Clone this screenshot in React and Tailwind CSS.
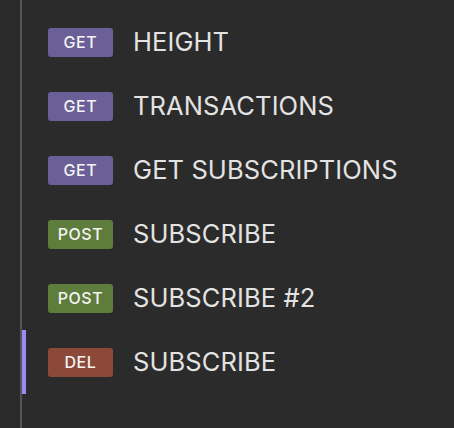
export default function App() {
  const items = [
    { m: "GET", label: "HEIGHT" },
    { m: "GET", label: "TRANSACTIONS" },
    { m: "GET", label: "GET SUBSCRIPTIONS" },
    { m: "POST", label: "SUBSCRIBE" },
    { m: "POST", label: "SUBSCRIBE #2" },
    { m: "DEL", label: "SUBSCRIBE", active: true },
  ];
  const badge = {
    GET: "bg-[#6a5f96]",
    POST: "bg-[#5e7d3d]",
    DEL: "bg-[#8c4937]",
  };
  return (
    <div className="w-[454px] h-[428px] bg-[#2b2b2b] flex" style={{ fontFamily: "Inter, 'Liberation Sans', sans-serif" }}>
      <div className="w-[20px] shrink-0" />
      <div className="w-[2px] shrink-0 bg-[#555555]" />
      <div className="flex flex-col pt-[10px]">
        {items.map((it, i) => (
          <div key={i} className="flex items-center h-[64px] relative">
            {it.active && <div className="absolute left-0 top-0 h-[64px] w-[4px] bg-[#9a8cf2]" />}
            <div className={`ml-[26px] w-[65px] h-[29px] rounded-[3px] flex items-center justify-center text-[#f4f4f4] text-[16px] font-medium tracking-[0.6px] ${badge[it.m]}`}>
              {it.m}
            </div>
            <div className="ml-[20px] text-[#e3e3e3] text-[25.5px] tracking-[0.1px] leading-none">{it.label}</div>
          </div>
        ))}
      </div>
    </div>
  );
}
